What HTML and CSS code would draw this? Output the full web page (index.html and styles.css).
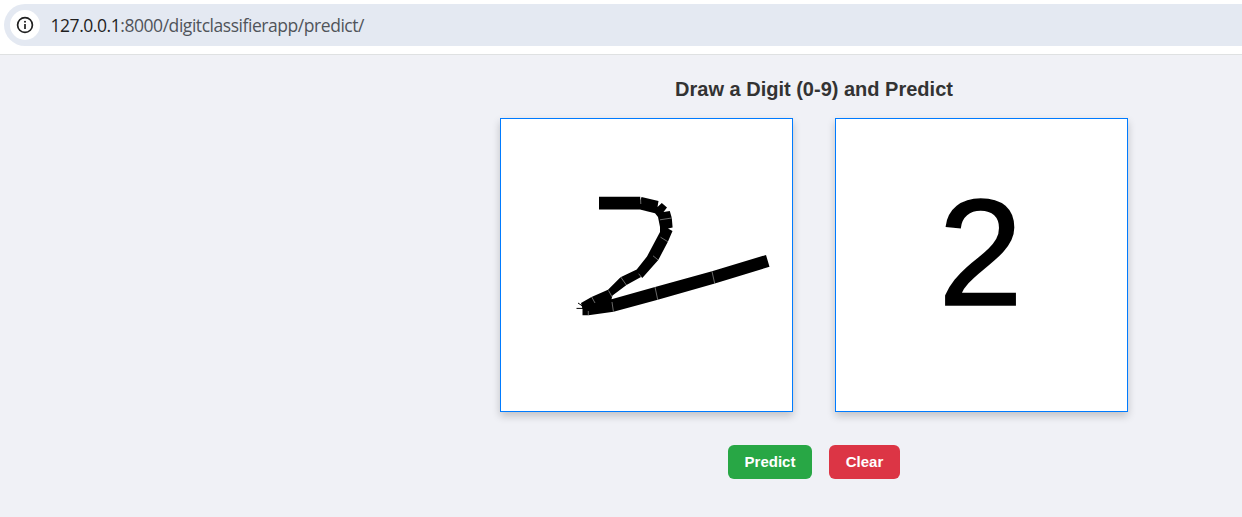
FILE: index.html
```
<!DOCTYPE html>
<html lang="en">
<head>
<meta charset="utf-8">
<title>Digit Classifier</title>
<link rel="stylesheet" href="styles.css">
</head>
<body>
<header class="toolbar">
  <div class="address">
    <span class="info">
      <svg width="18" height="18" viewBox="0 0 18 18"><circle cx="9" cy="9" r="7.4" fill="none" stroke="#1f1f1f" stroke-width="1.7"/><path d="M9 8v5" stroke="#1f1f1f" stroke-width="1.7"/><circle cx="9" cy="5.7" r="1" fill="#1f1f1f"/></svg>
    </span>
    <span class="url"><span class="host">127.0.0.1</span><span class="path">:8000/digitclassifierapp/predict/</span></span>
  </div>
</header>
<main class="page">
  <h1 class="title">Draw a Digit (0-9) and Predict</h1>
  <div class="boards">
    <div class="board">
      <svg class="sketch" viewBox="501 119 291 292">
        <path class="fill" d="M599 196.8H640.3L640.6 200L641.5 197L658.5 201L657.5 207L661.8 203L667 207.5L663.5 212L669.8 211L671.8 218L672.6 227.6L668 228.5L672.5 231L668 241.5L658.3 260L652.5 266.5L642.3 278L638 274.5L641 277L626.5 285L612.5 295.5L611.5 299.3L655 287L712 271.2L766 255L769.5 266.8L714.8 283.6L657.8 299.8L613.5 311.7L588.5 315.2H582.5V309L581 303L591.5 297L608 289.8L620.5 277.3L636.7 269.5L647 256.5L660 232V227L658 217L655 213.3L640 209.6H599Z"/>
        <path class="seam" d="M640.5 197L640.8 204M660 219.8L671.8 218M660.5 237.2L667.8 241.7M653 255.8L658.8 260.5M638.7 273.7L642 278M620.7 277L626.7 285.5M608.5 290.5L612.7 298M591.7 297L595 303M612 302L613.4 311.5M655 287L657.7 299.7M712 271.5L714.7 283.5M588.3 311V315"/>
        <path class="hair" d="M576.5 308.4H584M578 303L584 307"/>
      </svg>
    </div>
    <div class="board result">2</div>
  </div>
  <div class="actions">
    <button class="btn predict">Predict</button>
    <button class="btn clear">Clear</button>
  </div>
</main>
</body>
</html>
```
FILE: styles.css
```
* { box-sizing: border-box; }
body { margin: 0; height: 517px; overflow: hidden; background: #f0f1f6; font-family: "Liberation Sans", Arial, sans-serif; }
.toolbar { height: 55px; padding: 4px 0 0 4px; background: #fff; border-bottom: 1px solid #dfe1e2; }
.address { display: flex; align-items: center; height: 42px; padding-left: 6px; background: #e4e9f2; border-radius: 21px 0 0 21px; }
.info { display: flex; align-items: center; justify-content: center; width: 30px; height: 30px; border-radius: 50%; background: #fff; }
.url { margin-left: 10.5px; font: 17.5px/24px "Open Sans", "Noto Sans", sans-serif; letter-spacing: -0.45px; white-space: nowrap; }
.host { color: #1f1f1f; }
.path { color: #50545a; }
.page { display: flex; flex-direction: column; align-items: center; padding: 22px 0 0 386px; }
.title { margin: 0; font-size: 20px; line-height: 24px; font-weight: bold; color: #333; }
.boards { display: flex; gap: 42px; margin-top: 17px; }
.board { width: 293px; height: 294px; background: #fff; border: 1px solid #007bff; box-shadow: 0 4px 8px rgba(0, 0, 0, 0.2); }
.sketch { display: block; width: 291px; height: 292px; fill: none; }
.fill { fill: #000; }
.seam { stroke: #fff; stroke-opacity: 0.6; stroke-width: 0.7; }
.hair { stroke: #000; stroke-width: 1; }
.result { padding: 47px 2px 0 0; text-align: center; font-size: 152px; line-height: 173px; color: #000; -webkit-text-stroke: 1.6px #000; }
.actions { display: flex; gap: 17px; margin-top: 33px; }
.btn { height: 34px; padding: 0; border: 0; border-radius: 6px; color: #fff; font: bold 15px/34px "Liberation Sans", Arial, sans-serif; }
.predict { width: 84px; background: #28a745; }
.clear { width: 71px; background: #dc3545; }
```
